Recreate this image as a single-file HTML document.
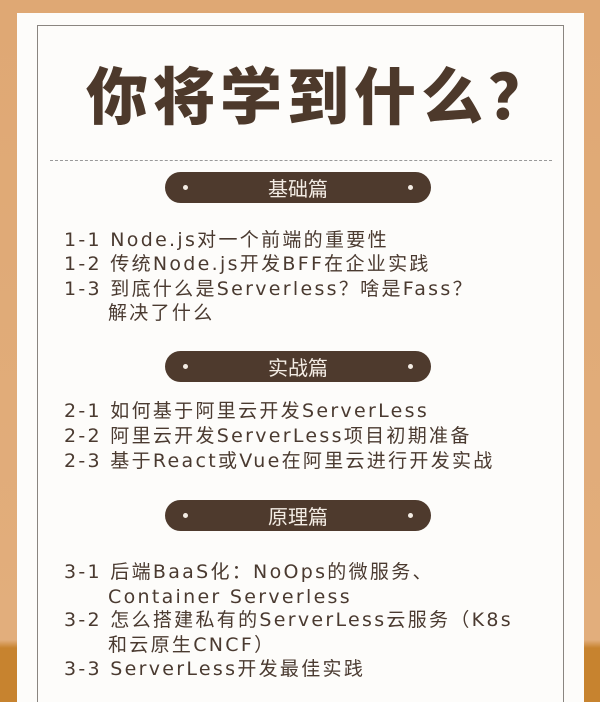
<!DOCTYPE html>
<html><head><meta charset="utf-8"><style>
html,body{margin:0;padding:0;width:600px;height:702px;overflow:hidden}
body{position:relative;background:linear-gradient(#dfa874 0,#e2ae7c 640px,#c7832f 648px,#c7832f 702px);font-family:"Liberation Sans","Noto Sans CJK SC",sans-serif}
.card{position:absolute;left:17px;top:13px;width:567px;height:689px;background:#fdfcfa}
.inner{position:absolute;left:37px;top:25px;width:527px;height:677px;border:1px solid #8a8580;border-bottom:none;box-sizing:border-box}
.title{position:absolute;left:86px;top:42px;width:480px;font-family:"Noto Sans CJK SC",sans-serif;font-weight:900;font-size:62px;letter-spacing:5px;color:#4d392b;line-height:100px;white-space:nowrap}
.dash{position:absolute;left:50px;top:160px;width:502px;border-top:1px dashed #999}
.pill{position:absolute;left:165px;width:266px;height:31px;border-radius:16px;background:#4e3a2d;color:#f3ece4;font-family:"Noto Sans CJK SC",sans-serif;font-size:20px;line-height:31px;text-align:center}
.pill:before,.pill:after{content:"";position:absolute;top:13px;width:5px;height:5px;border-radius:50%;background:#f3ece4}
.pill:before{left:18px}.pill:after{right:18px}
.it{position:absolute;left:64px;font-size:19px;letter-spacing:2.3px;color:#4a3a30;line-height:24px;white-space:nowrap;font-family:"DejaVu Sans","Noto Sans CJK SC",sans-serif}
.in{left:108px}
</style></head><body>
<div class="card"></div><div class="inner"></div>
<div class="title">你将学到什么？</div>
<div class="dash"></div>
<div class="pill" style="top:172px">基础篇</div>
<div class="it" style="top:228px">1-1 Node.js对一个前端的重要性</div>
<div class="it" style="top:252px">1-2 传统Node.js开发BFF在企业实践</div>
<div class="it" style="top:277px">1-3 到底什么是Serverless？啥是Fass？</div>
<div class="it in" style="top:301px">解决了什么</div>
<div class="pill" style="top:351px">实战篇</div>
<div class="it" style="top:399px">2-1 如何基于阿里云开发ServerLess</div>
<div class="it" style="top:424px">2-2 阿里云开发ServerLess项目初期准备</div>
<div class="it" style="top:449px">2-3 基于React或Vue在阿里云进行开发实战</div>
<div class="pill" style="top:500px">原理篇</div>
<div class="it" style="top:560px">3-1 后端BaaS化：NoOps的微服务、</div>
<div class="it in" style="top:585px">Container Serverless</div>
<div class="it" style="top:608px">3-2 怎么搭建私有的ServerLess云服务（K8s</div>
<div class="it in" style="top:633px">和云原生CNCF）</div>
<div class="it" style="top:657px">3-3 ServerLess开发最佳实践</div>
</body></html>
